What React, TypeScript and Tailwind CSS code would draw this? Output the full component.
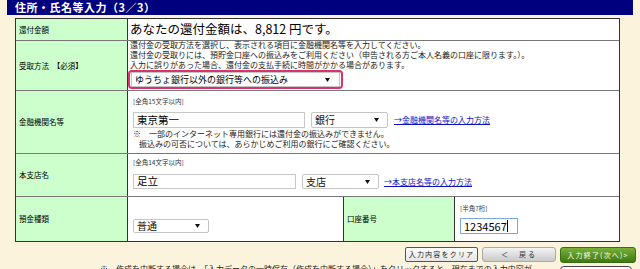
import React from "react";

const Arrow = () => (
  <svg width="5" height="4" viewBox="0 0 5 4" className="shrink-0">
    <path d="M0 0 L5 0 L2.5 4 Z" fill="#111" />
  </svg>
);

function Select({ w, text, cls = "" }: { w: string; text: string; cls?: string }) {
  return (
    <div
      className={`${w} ${cls} bg-white border border-[#c4c4c4] rounded-[2px] flex items-center justify-between pl-[3px] pr-[8px] text-[10px] leading-none text-[#111]`}
    >
      <span>{text}</span>
      <Arrow />
    </div>
  );
}

export default function App() {
  return (
    <div className="w-[640px] h-[269px] overflow-hidden bg-[#fcf3dc] font-['Noto_Sans_CJK_JP',sans-serif] text-black">
      {/* title bar */}
      <div className="ml-[7px] w-[626px] h-[15px] bg-[#00007f] text-white font-bold text-[11px] leading-[15px] pl-[8px] tracking-[0.5px]">
        住所・氏名等入力（3／3）
      </div>

      {/* table */}
      <div className="ml-[15px] mt-[3px] w-[605px] border border-[#333] bg-white">
        {/* row 1 */}
        <div className="flex h-[22px] border-b border-[#777]">
          <div className="w-[112px] shrink-0 bg-[#ccffcc] border-r border-[#333] flex items-center pl-[3px] text-[7.5px]">
            還付金額
          </div>
          <div className="flex-1 flex items-center pl-[2px] text-[12.5px] leading-none">
            あなたの還付金額は、8,812 円です。
          </div>
        </div>

        {/* row 2 */}
        <div className="flex h-[50px] border-b border-[#777]">
          <div className="w-[112px] shrink-0 bg-[#ccffcc] border-r border-[#333] flex items-center pl-[3px] text-[7.5px]">
            受取方法　【必須】
          </div>
          <div className="flex-1 flex flex-col">
            <div className="-mt-[1px] pl-[2px] text-[8px] leading-[10px] text-[#222] whitespace-nowrap">
              <div>還付金の受取方法を選択し、表示される項目に金融機関名等を入力してください。</div>
              <div>還付金の受取りには、預貯金口座への振込みをご利用ください（申告される方ご本人名義の口座に限ります。）。</div>
              <div>入力に誤りがあった場合、還付金の支払手続に時間がかかる場合があります。</div>
            </div>
            <div className="w-[215px] h-[19px] border-2 border-[#d8336f] rounded-[4px] flex items-center px-[1px]">
              <div className="w-full h-[15px] bg-white border border-[#c4c4c4] flex items-center justify-between pl-[3px] pr-[9px] text-[9px] leading-none">
                <span>ゆうちょ銀行以外の銀行等への振込み</span>
                <Arrow />
              </div>
            </div>
          </div>
        </div>

        {/* row 3 */}
        <div className="flex h-[63px] border-b border-[#777]">
          <div className="w-[112px] shrink-0 bg-[#ccffcc] border-r border-[#333] flex items-center pl-[3px] text-[7.5px]">
            金融機関名等
          </div>
          <div className="flex-1 pt-[5px] pl-[5px]">
            <div className="text-[6.5px] leading-[10px] text-[#333]">[全角15文字以内]</div>
            <div className="mt-[6px] flex items-center">
              <div className="w-[172px] h-[16px] border border-[#c8c8c8] bg-white flex items-center pl-[3px] text-[10.5px] leading-none">
                東京第一
              </div>
              <Select w="w-[77px] h-[16px] ml-[6px]" text="銀行" />
              <a className="ml-[6px] text-[8px] text-[#1010c8] underline leading-none">→金融機関名等の入力方法</a>
            </div>
            <div className="mt-[1px] text-[8px] leading-[9.5px] text-[#222] whitespace-nowrap">
              <div>※　一部のインターネット専用銀行には還付金の振込みができません。</div>
              <div className="pl-[6px]">振込みの可否については、あらかじめご利用の銀行にご確認ください。</div>
            </div>
          </div>
        </div>

        {/* row 4 */}
        <div className="flex h-[43px] border-b border-[#777]">
          <div className="w-[112px] shrink-0 bg-[#ccffcc] border-r border-[#333] flex items-center pl-[3px] text-[7.5px]">
            本支店名
          </div>
          <div className="flex-1 pt-[3px] pl-[5px]">
            <div className="text-[6.5px] leading-[10px] text-[#333]">[全角14文字以内]</div>
            <div className="mt-[7px] flex items-center">
              <div className="w-[163px] h-[15px] border border-[#c8c8c8] bg-white flex items-center pl-[3px] text-[10.5px] leading-none">
                足立
              </div>
              <Select w="w-[77px] h-[15px] ml-[6px]" text="支店" />
              <a className="ml-[5px] text-[8px] text-[#1010c8] underline leading-none">→本支店名等の入力方法</a>
            </div>
          </div>
        </div>

        {/* row 5 */}
        <div className="flex h-[44px]">
          <div className="w-[112px] shrink-0 bg-[#ccffcc] border-r border-[#333] flex items-center pl-[3px] text-[7.5px]">
            預金種類
          </div>
          <div className="w-[215px] shrink-0 pt-[22px] pl-[5px]">
            <Select w="w-[76px] h-[14px]" text="普通" />
          </div>
          <div className="w-[112px] shrink-0 bg-[#ccffcc] border-l border-r border-[#333] flex items-center pl-[3px] text-[7.5px]">
            口座番号
          </div>
          <div className="flex-1 pt-[6px] pl-[5px]">
            <div className="text-[6.5px] leading-[10px] text-[#333]">[半角7桁]</div>
            <div className="mt-[5px] w-[58px] h-[16px] border border-[#7fa6dc] bg-white flex items-center pl-[3px] text-[11px] leading-none">
              1234567<span className="inline-block w-[1px] h-[12px] bg-black" />
            </div>
          </div>
        </div>
      </div>

      {/* buttons */}
      <div className="mt-[5px] flex justify-end gap-[4px] pr-[4px]">
        <div className="w-[73px] h-[15px] rounded-[2px] border border-[#555] bg-gradient-to-b from-white to-[#e6e6e6] flex items-center justify-center text-[7px] tracking-[1.2px] leading-none text-[#222] whitespace-nowrap">
          入力内容をクリア
        </div>
        <div className="w-[74px] h-[15px] rounded-[3px] border border-[#aaa] bg-gradient-to-b from-[#f4f4f4] to-[#c9c9c9] flex items-center justify-center text-[7px] tracking-[2px] leading-none text-[#333] whitespace-nowrap">
          ＜　戻る
        </div>
        <div className="w-[76px] h-[16px] rounded-[3px] border border-[#3b6e12] bg-gradient-to-b from-[#78b236] to-[#3e7a12] flex items-center justify-center text-[7px] tracking-[1.2px] leading-none text-white whitespace-nowrap">
          入力終了(次へ)&gt;
        </div>
      </div>

      {/* bottom text */}
      <div className="mt-[1px] flex items-start">
        <div className="ml-[100px] w-[432px] overflow-hidden whitespace-nowrap text-[8px] leading-[10px] text-[#222]">
          ※　作成を中断する場合は、「入力データの一時保存（作成を中断する場合）」をクリックすると、現在までの入力内容が保存されます。
        </div>
        <div className="ml-[28px] mt-[2px] w-[72px] h-[12px] rounded-[4px] border border-[#444] bg-white flex items-center justify-center text-[6.5px] leading-none whitespace-nowrap">
          入力データの一時保存
        </div>
      </div>
    </div>
  );
}
